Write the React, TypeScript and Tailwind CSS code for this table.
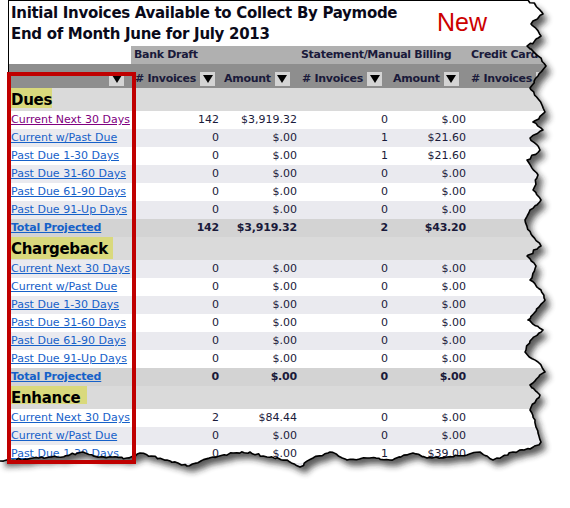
import React from "react";

const COLS = "grid grid-cols-[122px_89px_78px_91px_78px_91px_78px]";

type Row = { label: string; v: string[]; stripe: boolean; visited?: boolean };

function Tri() {
  return (
    <span className="inline-flex items-center justify-center w-[15px] h-[14px] bg-[#d4d4d4] shrink-0">
      <svg width="10" height="8" viewBox="0 0 10 8">
        <path d="M0 0H10L5 8Z" fill="#000" />
      </svg>
    </span>
  );
}

function HeadCell({ label }: { label: string }) {
  return (
    <div className="flex items-end pl-[4px] gap-[4px] whitespace-nowrap">
      <span className="leading-[15px]">{label}</span>
      <Tri />
    </div>
  );
}

function DataRow({ r }: { r: Row }) {
  return (
    <div className={`${COLS} h-[18px] leading-[18px] text-[11px] ${r.stripe ? "bg-[#eaeaef]" : "bg-white"}`}>
      <div className="pl-[2px] whitespace-nowrap">
        <a className={`underline ${r.visited ? "text-[#800080]" : "text-[#1661c9]"}`}>{r.label}</a>
      </div>
      {r.v.map((x, i) => (
        <div key={i} className="text-right pr-[1px]">
          {x}
        </div>
      ))}
      <div />
    </div>
  );
}

function TotalRow({ v }: { v: string[] }) {
  return (
    <div className={`${COLS} h-[18px] leading-[18px] text-[11px] font-bold bg-[#d3d3d3] tracking-[-0.2px]`}>
      <div className="pl-[2px] whitespace-nowrap">
        <a className="underline text-[#1661c9]">Total Projected</a>
      </div>
      {v.map((x, i) => (
        <div key={i} className="text-right pr-[1px]">
          {x}
        </div>
      ))}
      <div />
    </div>
  );
}

function Section({ title, hl }: { title: string; hl: string }) {
  return (
    <div className="h-[23px] bg-[#dadada] pl-[2px]">
      <span className={`inline-block ${hl} bg-[#d9d97c] pt-[4px] text-[15px] leading-[17px] font-bold text-black tracking-[-0.3px] whitespace-nowrap`}>
        {title}
      </span>
    </div>
  );
}

function rng(seed: number) {
  let s = seed;
  return () => {
    s = (s * 16807) % 2147483647;
    return (s - 1) / 2147483646;
  };
}

const KEY: [number, number][] = [
  [528, 0], [536, 6], [543, 14], [531, 24], [541, 36], [527, 46], [538, 56], [546, 66], [538, 76], [530, 88],
  [539, 100], [545, 112], [533, 122], [543, 130], [530, 138], [540, 150], [527, 160], [538, 175], [533, 190],
  [541, 200], [530, 210], [525, 220], [531, 234], [541, 246], [527, 256], [536, 266], [530, 280], [541, 290],
  [545, 300], [528, 320], [543, 330], [530, 341], [525, 352], [538, 362], [545, 372], [530, 385], [540, 395],
  [530, 410], [535, 420], [538, 433], [541, 442], [530, 449], [513, 452], [493, 460], [480, 452], [467, 455],
  [447, 457], [427, 458], [413, 453], [390, 460], [367, 458], [347, 460], [330, 452], [313, 458], [300, 467],
  [287, 460], [267, 457], [250, 452], [233, 453], [213, 457], [187, 466], [167, 460], [140, 453], [127, 458],
  [100, 457], [83, 452], [57, 457], [33, 458], [13, 460], [0, 461],
];

function edgePoints(): [number, number][] {
  const r = rng(12345);
  const pts: [number, number][] = [];
  for (let i = 0; i < KEY.length - 1; i++) {
    const [x1, y1] = KEY[i];
    const [x2, y2] = KEY[i + 1];
    const d = Math.hypot(x2 - x1, y2 - y1);
    const n = Math.max(1, Math.round(d / 3));
    for (let k = 0; k < n; k++) {
      const t = k / n;
      const jx = k === 0 ? 0 : (r() - 0.5) * 2.2;
      const jy = k === 0 ? 0 : (r() - 0.5) * 2.2;
      pts.push([x1 + (x2 - x1) * t + jx, y1 + (y2 - y1) * t + jy]);
    }
  }
  pts.push(KEY[KEY.length - 1]);
  return pts;
}

function Tear() {
  const pts = edgePoints();
  const line = "M" + pts.map((p) => `${p[0].toFixed(1)} ${p[1].toFixed(1)}`).join(" L");
  const inside = "M0 0 L" + pts.map((p) => `${p[0].toFixed(1)} ${p[1].toFixed(1)}`).join(" L") + " L0 0 Z";
  const outside = "M0 0 H570 V508 H0 Z " + inside;
  return (
    <svg width="570" height="508" className="absolute left-0 top-0 pointer-events-none">
      <defs>
        <filter id="blr" x="-10%" y="-10%" width="120%" height="120%">
          <feGaussianBlur stdDeviation="3" />
        </filter>
        <clipPath id="outc">
          <path d={outside} clipRule="evenodd" />
        </clipPath>
      </defs>
      <path d={outside} fill="#fff" fillRule="evenodd" />
      <g clipPath="url(#outc)">
        <path d={inside} transform="translate(5 6)" fill="#222" opacity="0.75" filter="url(#blr)" />
      </g>
      <path d={line} fill="none" stroke="#000" strokeWidth="1.6" strokeLinejoin="round" />
    </svg>
  );
}

const Z = ["0", "$.00", "0", "$.00"];

const dues: Row[] = [
  { label: "Current Next 30 Days", v: ["142", "$3,919.32", "0", "$.00"], stripe: false, visited: true },
  { label: "Current w/Past Due", v: ["0", "$.00", "1", "$21.60"], stripe: true },
  { label: "Past Due 1-30 Days", v: ["0", "$.00", "1", "$21.60"], stripe: false },
  { label: "Past Due 31-60 Days", v: Z, stripe: true },
  { label: "Past Due 61-90 Days", v: Z, stripe: false },
  { label: "Past Due 91-Up Days", v: Z, stripe: true },
];
const charge: Row[] = [
  { label: "Current Next 30 Days", v: Z, stripe: true },
  { label: "Current w/Past Due", v: Z, stripe: false },
  { label: "Past Due 1-30 Days", v: Z, stripe: true },
  { label: "Past Due 31-60 Days", v: Z, stripe: false },
  { label: "Past Due 61-90 Days", v: Z, stripe: true },
  { label: "Past Due 91-Up Days", v: Z, stripe: false },
];
const enh: Row[] = [
  { label: "Current Next 30 Days", v: ["2", "$84.44", "0", "$.00"], stripe: false },
  { label: "Current w/Past Due", v: Z, stripe: true },
  { label: "Past Due 1-30 Days", v: ["0", "$.00", "1", "$39.00"], stripe: false },
];

export default function App() {
  return (
    <div className="relative w-[570px] h-[508px] bg-white overflow-hidden font-['DejaVu_Sans',Verdana,sans-serif] text-[#1a1a3a]">
      <div className="ml-[8px] w-[700px] border-l border-t border-black">
        <div className="pl-[2px] pt-[2px] pb-[1px] text-[15px] leading-[21px] font-bold text-[#0a0a1a] tracking-[-0.3px] whitespace-nowrap">
          <div>Initial Invoices Available to Collect By Paymode</div>
          <div>End of Month June for July 2013</div>
        </div>
        <div className={`${COLS} h-[18px] text-[11px] font-bold tracking-[-0.3px] leading-[18px]`}>
          <div className="bg-white" />
          <div className="col-span-2 bg-[#b0b0b0] pl-[3px]">Bank Draft</div>
          <div className="col-span-2 bg-[#b0b0b0] pl-[3px] whitespace-nowrap">Statement/Manual Billing</div>
          <div className="col-span-2 bg-[#b0b0b0] pl-[4px] whitespace-nowrap">Credit Card</div>
        </div>
        <div className={`${COLS} h-[24px] text-[11px] font-bold tracking-[-0.3px] bg-[#8e8e8e] pb-[2px]`}>
          <div className="flex items-end justify-end pr-[7px]">
            <Tri />
          </div>
          <HeadCell label="# Invoices" />
          <HeadCell label="Amount" />
          <HeadCell label="# Invoices" />
          <HeadCell label="Amount" />
          <HeadCell label="# Invoices" />
          <div />
        </div>
        <Section title="Dues" hl="w-[41px] h-[20px]" />
        {dues.map((r, i) => (
          <DataRow key={"d" + i} r={r} />
        ))}
        <TotalRow v={["142", "$3,919.32", "2", "$43.20"]} />
        <Section title="Chargeback" hl="w-[102px] h-[22px]" />
        {charge.map((r, i) => (
          <DataRow key={"c" + i} r={r} />
        ))}
        <TotalRow v={["0", "$.00", "0", "$.00"]} />
        <Section title="Enhance" hl="w-[76px] h-[18px]" />
        {enh.map((r, i) => (
          <DataRow key={"e" + i} r={r} />
        ))}
        <div className="h-[40px] bg-[#eaeaef]" />
      </div>
      <div className="absolute left-[437px] top-[10px] text-[25px] leading-[25px] text-[#cc0000] font-['Liberation_Sans',Arial,sans-serif]">
        New
      </div>
      <Tear />
      <div className="absolute left-[7px] top-[72px] w-[129px] h-[392px] border-[4px] border-[#c00000]" />
    </div>
  );
}
